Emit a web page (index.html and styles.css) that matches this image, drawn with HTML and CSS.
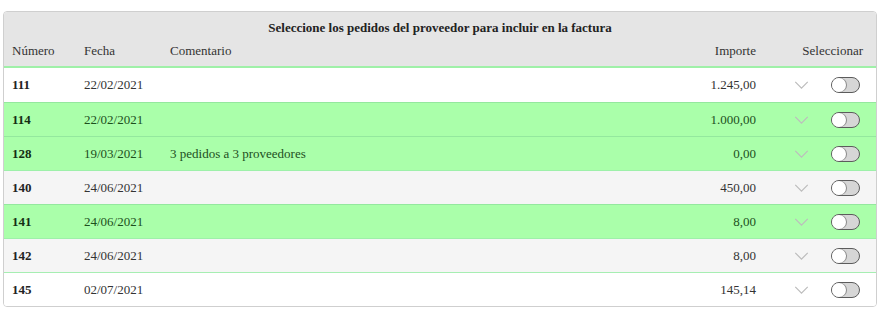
FILE: index.html
```html
<!DOCTYPE html>
<html lang="es">
<head>
<meta charset="utf-8">
<title>Pedidos del proveedor</title>
<link rel="stylesheet" href="styles.css">
</head>
<body>
<div class="card">
  <div class="head">
    <div class="title">Seleccione los pedidos del proveedor para incluir en la factura</div>
    <div class="row labels">
      <span>Número</span>
      <span>Fecha</span>
      <span>Comentario</span>
      <span class="amount">Importe</span>
      <span class="sel-label">Seleccionar</span>
    </div>
  </div>

  <div class="row item">
    <span class="num">111</span><span>22/02/2021</span><span></span><span class="amount">1.245,00</span>
    <span class="sel"><svg class="chev" viewBox="0 0 16 9"><polyline points="1,1 8,8 15,1"/></svg><i class="toggle"></i></span>
  </div>
  <div class="row item green">
    <span class="num">114</span><span>22/02/2021</span><span></span><span class="amount">1.000,00</span>
    <span class="sel"><svg class="chev" viewBox="0 0 16 9"><polyline points="1,1 8,8 15,1"/></svg><i class="toggle"></i></span>
  </div>
  <div class="row item green">
    <span class="num">128</span><span>19/03/2021</span><span>3 pedidos a 3 proveedores</span><span class="amount">0,00</span>
    <span class="sel"><svg class="chev" viewBox="0 0 16 9"><polyline points="1,1 8,8 15,1"/></svg><i class="toggle"></i></span>
  </div>
  <div class="row item grey">
    <span class="num">140</span><span>24/06/2021</span><span></span><span class="amount">450,00</span>
    <span class="sel"><svg class="chev" viewBox="0 0 16 9"><polyline points="1,1 8,8 15,1"/></svg><i class="toggle"></i></span>
  </div>
  <div class="row item green">
    <span class="num">141</span><span>24/06/2021</span><span></span><span class="amount">8,00</span>
    <span class="sel"><svg class="chev" viewBox="0 0 16 9"><polyline points="1,1 8,8 15,1"/></svg><i class="toggle"></i></span>
  </div>
  <div class="row item grey">
    <span class="num">142</span><span>24/06/2021</span><span></span><span class="amount">8,00</span>
    <span class="sel"><svg class="chev" viewBox="0 0 16 9"><polyline points="1,1 8,8 15,1"/></svg><i class="toggle"></i></span>
  </div>
  <div class="row item">
    <span class="num">145</span><span>02/07/2021</span><span></span><span class="amount">145,14</span>
    <span class="sel"><svg class="chev" viewBox="0 0 16 9"><polyline points="1,1 8,8 15,1"/></svg><i class="toggle"></i></span>
  </div>
</div>
</body>
</html>
```
FILE: styles.css
```css
html, body {
  margin: 0;
  padding: 0;
  background: #ffffff;
}

body {
  padding: 11px 8px 0 3px;
  font-family: "Liberation Serif", "Times New Roman", serif;
  font-size: 13px;
  color: #333333;
}

.card {
  width: 872px;
  border: 1px solid #cfcfcf;
  border-radius: 4px;
  overflow: hidden;
  background: #ffffff;
}

.head {
  background: #e5e5e5;
  border-bottom: 2px solid #9ff0a8;
}

.title {
  text-align: center;
  font-weight: bold;
  color: #222222;
  padding-top: 8px;
  height: 16px;
  line-height: 16px;
}

.row {
  display: grid;
  grid-template-columns: 72px 86px 1fr 80px 107px;
  align-items: center;
  padding: 0 13px 0 8px;
}

.labels {
  height: 30px;
  color: #333333;
}

.amount {
  text-align: right;
}

.sel-label {
  justify-self: end;
}

.item {
  height: 33px;
  border-top: 1px solid #a6eeb2;
  background: #ffffff;
}

.head + .item {
  border-top: none;
  height: 34px;
}

.item.green {
  background: #aaffaa;
  color: #1d4f1d;
  border-top-color: #94e89e;
}

.item.grey {
  background: #f5f5f5;
  border-top-color: #9ef0aa;
}

.num {
  font-weight: bold;
  color: #222222;
}

.green .num {
  color: #142e14;
}

.sel {
  display: flex;
  align-items: center;
  padding-left: 38px;
}

.chev {
  width: 15px;
  height: 8px;
  fill: none;
  stroke: #bdbdbd;
  stroke-width: 1.4;
}

.toggle {
  position: relative;
  display: block;
  width: 27px;
  height: 14px;
  margin-left: 22px;
  border: 1px solid #5c5c5c;
  border-radius: 8px;
  background: #d6d6d6;
}

.toggle::before {
  content: "";
  position: absolute;
  left: 0;
  top: 0;
  width: 14px;
  height: 14px;
  border-radius: 50%;
  background: #ffffff;
  box-shadow: 1px 0 0 #8a8a8a;
}
```
